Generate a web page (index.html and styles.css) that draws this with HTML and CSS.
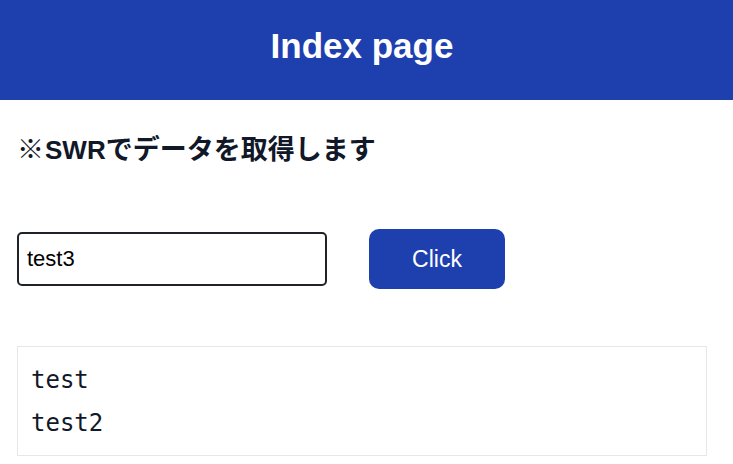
FILE: index.html
```html
<!DOCTYPE html>
<html lang="ja">
<head>
<meta charset="utf-8">
<title>Index page</title>
<link rel="stylesheet" href="styles.css">
</head>
<body>
<header class="site-header">
  <h1 class="site-title">Index page</h1>
</header>
<main class="main">
  <h2 class="lead">※<span class="lead-latin">SWR</span>でデータを取得します</h2>
  <div class="form-row">
    <input class="text-input" type="text" value="test3">
    <button class="btn" type="button">Click</button>
  </div>
  <div class="output">
    <p class="output-line">test</p>
    <p class="output-line">test2</p>
  </div>
</main>
</body>
</html>
```
FILE: styles.css
```css
* { box-sizing: border-box; }
html, body { margin: 0; padding: 0; background: #ffffff; }
body {
  font-family: "Liberation Sans", Arial, "Noto Sans CJK JP", sans-serif;
  color: #111827;
}
.site-header {
  background: #1e40af;
  height: 100px;
  padding: 26px 9px 0 0;
}
.site-title {
  margin: 0;
  text-align: center;
  color: #ffffff;
  font-size: 35px;
  line-height: 40px;
  font-weight: 700;
}
.main {
  padding: 0 26px 0 17px;
}
.lead {
  margin: 32px 0 0 0;
  height: 32px;
  font-family: "Noto Sans CJK JP", sans-serif;
  font-size: 27px;
  line-height: 32px;
  font-weight: 700;
  color: #111827;
}
.lead-latin {
  font-family: "Liberation Sans", Arial, sans-serif;
  font-size: 26px;
  line-height: 0;
  margin-left: 1px;
}
.form-row {
  margin-top: 65px;
  display: flex;
  align-items: center;
  gap: 42px;
}
.text-input {
  width: 310px;
  height: 54px;
  border: 2px solid #1f2328;
  border-radius: 5px;
  padding: 0 8px;
  font-family: "Liberation Sans", Arial, sans-serif;
  font-size: 22px;
  color: #000;
  outline: none;
}
.btn {
  width: 136px;
  height: 60px;
  border: none;
  border-radius: 10px;
  background: #1e40af;
  color: #ffffff;
  font-family: "Liberation Sans", Arial, sans-serif;
  font-size: 23px;
}
.output {
  margin-top: 57px;
  border: 1px solid #e5e7eb;
  height: 110px;
  padding: 12px 13px;
}
.output-line {
  margin: 0;
  font-family: "DejaVu Sans Mono", monospace;
  font-size: 24px;
  line-height: 43px;
  color: #111827;
}
```
